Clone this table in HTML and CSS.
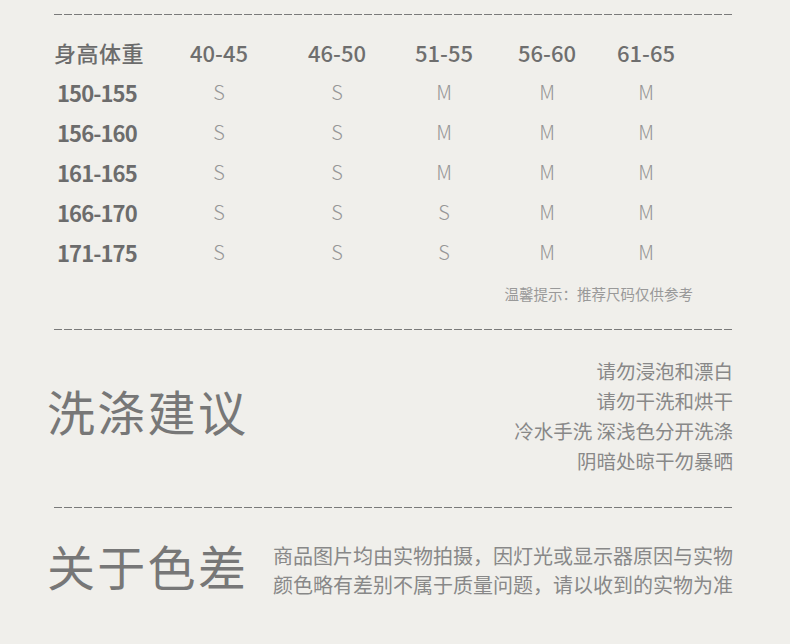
FILE: index.html
```html
<!DOCTYPE html>
<html lang="zh-CN">
<head>
<meta charset="utf-8">
<title>尺码与洗涤</title>
<link rel="stylesheet" href="styles.css">
</head>
<body>
<div class="page">
  <div class="dash"></div>

  <div class="size-table">
    <div class="cell head first">身高体重</div>
    <div class="cell head">40-45</div>
    <div class="cell head">46-50</div>
    <div class="cell head">51-55</div>
    <div class="cell head">56-60</div>
    <div class="cell head">61-65</div>

    <div class="cell first">150-155</div>
    <div class="cell val">S</div><div class="cell val">S</div><div class="cell val">M</div><div class="cell val">M</div><div class="cell val">M</div>

    <div class="cell first">156-160</div>
    <div class="cell val">S</div><div class="cell val">S</div><div class="cell val">M</div><div class="cell val">M</div><div class="cell val">M</div>

    <div class="cell first">161-165</div>
    <div class="cell val">S</div><div class="cell val">S</div><div class="cell val">M</div><div class="cell val">M</div><div class="cell val">M</div>

    <div class="cell first">166-170</div>
    <div class="cell val">S</div><div class="cell val">S</div><div class="cell val">S</div><div class="cell val">M</div><div class="cell val">M</div>

    <div class="cell first">171-175</div>
    <div class="cell val">S</div><div class="cell val">S</div><div class="cell val">S</div><div class="cell val">M</div><div class="cell val">M</div>
  </div>

  <div class="tip">温馨提示：推荐尺码仅供参考</div>

  <div class="dash"></div>

  <section class="wash">
    <h2 class="title">洗涤建议</h2>
    <div class="wash-list">
      <div>请勿浸泡和漂白</div>
      <div>请勿干洗和烘干</div>
      <div>冷水手洗 深浅色分开洗涤</div>
      <div>阴暗处晾干勿暴晒</div>
    </div>
  </section>

  <div class="dash"></div>

  <section class="color">
    <h2 class="title">关于色差</h2>
    <p class="color-text">商品图片均由实物拍摄，因灯光或显示器原因与实物<br>颜色略有差别不属于质量问题，请以收到的实物为准</p>
  </section>
</div>
</body>
</html>
```

FILE: styles.css
```css
* {
  box-sizing: border-box;
}

html, body {
  margin: 0;
  padding: 0;
  background: #f0efeb;
}

body {
  width: 790px;
  height: 644px;
  overflow: hidden;
  font-family: "Noto Sans CJK SC", "Noto Sans", sans-serif;
  color: #777;
}

.page {
  padding: 14px 56px 0 54px;
}

.dash {
  height: 1px;
  background: repeating-linear-gradient(to right, #7a7a7a 0 8px, transparent 8px 10px);
}

.size-table {
  margin-top: 17px;
  display: grid;
  grid-template-columns: 116px 98px 138px 76px 130px 68px;
  grid-auto-rows: 40px;
  align-items: center;
}

.cell {
  text-align: center;
  font-size: 20px;
  line-height: 40px;
}

.cell.head {
  font-size: 22px;
  font-weight: 500;
  color: #6e6e6e;
}

.cell.first {
  text-align: left;
  font-size: 22px;
  font-weight: 700;
  color: #6c6c6c;
  padding-left: 3px;
  letter-spacing: -0.9px;
}

.cell.head.first {
  padding-left: 0;
  font-weight: 500;
  letter-spacing: 0.5px;
}

.val {
  color: #969696;
  font-weight: 300;
}

.tip {
  text-align: right;
  padding-right: 41px;
  margin-top: 12px;
  font-size: 14.5px;
  line-height: 20px;
  color: #999;
  height: 45px;
}

.wash {
  display: flex;
  align-items: center;
  justify-content: space-between;
  padding: 26px 1px 31px 0;
}

.title {
  margin: 0 0 0 -7px;
  font-size: 48px;
  font-weight: 400;
  line-height: 60px;
  color: #777;
  letter-spacing: 2.3px;
}

.wash .title {
  margin-top: -12px;
}

.color .title {
  margin-top: -10px;
}

.wash-list {
  text-align: right;
  font-size: 19.5px;
  line-height: 30px;
  color: #888;
}

.color {
  display: flex;
  align-items: center;
  justify-content: space-between;
  padding: 33px 1px 0 0;
}

.color-text {
  margin: 0;
  font-size: 20px;
  line-height: 29px;
  color: #888;
  white-space: nowrap;
}
```
